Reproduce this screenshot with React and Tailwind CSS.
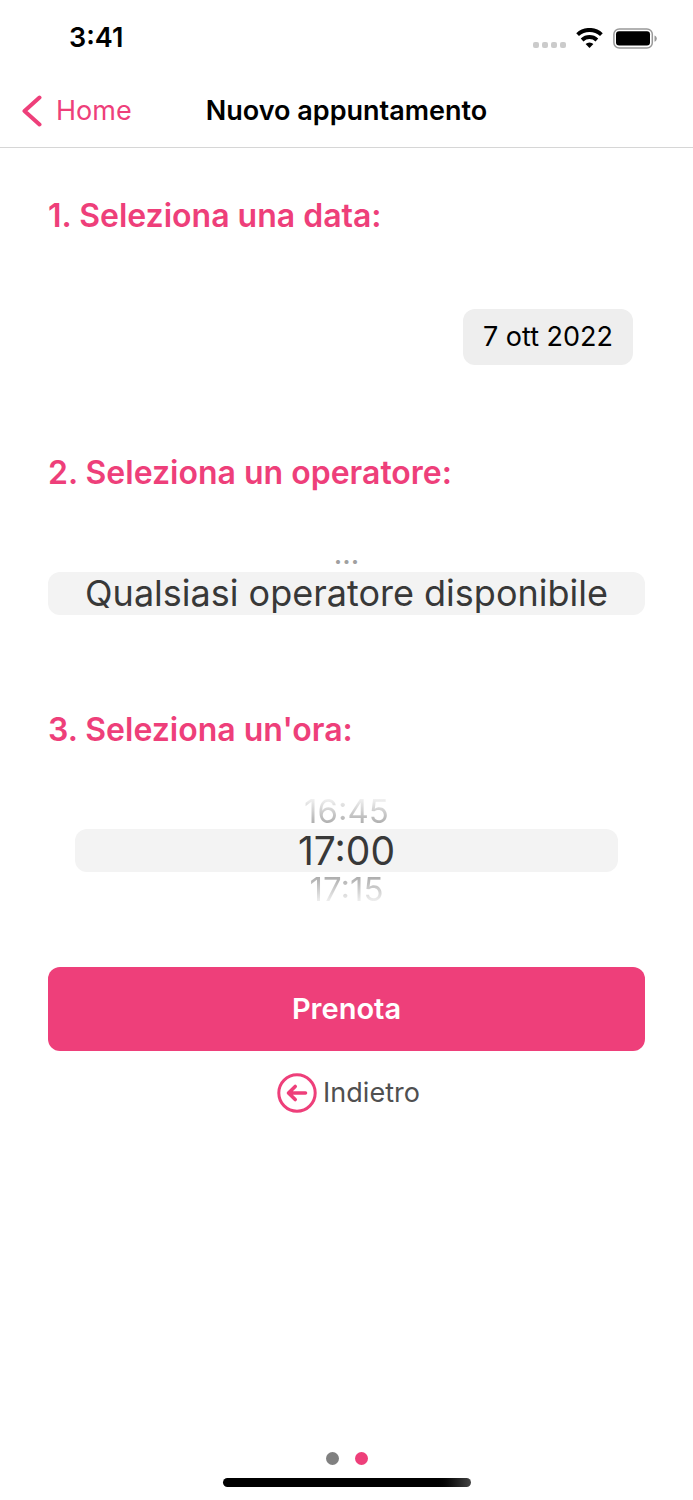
import React from 'react';

const hours = ['16:30', '16:45', '17:00', '17:15', '17:30'];

const StatusBar = () => (
    <div className="h-[74px] pt-0.5 pl-[69px] pr-9 flex items-center justify-between">
        <span className="text-[27px] leading-8 font-semibold">3:41</span>
        <div className="flex items-center gap-2.5">
            <div className="flex gap-[3px] pt-3.5">
                <span className="w-1.5 h-1.5 rounded-xs bg-[#cbcbcb]" />
                <span className="w-1.5 h-1.5 rounded-xs bg-[#cbcbcb]" />
                <span className="w-1.5 h-1.5 rounded-xs bg-[#cbcbcb]" />
                <span className="w-1.5 h-1.5 rounded-xs bg-[#cbcbcb]" />
            </div>
            <svg className="w-[27px] h-5" viewBox="0 0 27 20" fill="none" stroke="#000" strokeWidth="4" aria-hidden="true">
                <path d="M1.600 6.600a17.500 17.500 0 0 1 23.800 0" />
                <path d="M6.100 11.900a11 11 0 0 1 14.800 0" />
                <path d="M13.500 20 9.600 16a5.600 5.600 0 0 1 7.800 0z" fill="#000" stroke="none" />
            </svg>
            <svg className="w-11 h-[21px]" viewBox="0 0 44 21" aria-hidden="true">
                <rect x="0.9" y="0.9" width="38.4" height="19.2" rx="5.4" fill="none" stroke="#999" strokeWidth="1.5" />
                <rect x="3" y="3.2" width="34" height="14.4" rx="3" fill="#000" />
                <path d="M41.500 7.400c3 1 3 5.300 0 6.300z" fill="#999" />
            </svg>
        </div>
    </div>
);

const Section = ({ title, children }) => (
    <section>
        <h2 className="text-[32px] leading-10 font-semibold text-[#ee3f7a]">{title}</h2>
        <div className="mt-11 h-[113px] flex flex-col items-stretch justify-center">
            {children}
        </div>
    </section>
);

const App = () => {

    const [hour, setHour] = React.useState(2);

    return (
        <div className="min-h-screen flex flex-col bg-white text-black font-['Inter',sans-serif]">
            <StatusBar />
            <header className="h-[74px] grid grid-cols-[1fr_auto_1fr] items-center border-b border-[#d6d6d6]">
                <a href="#home" className="pl-[21px] flex items-center gap-3.5 text-[27px] leading-9 text-[#ee3f7a]">
                    <svg className="w-[21px] h-8" viewBox="0 0 21 32" fill="none" stroke="currentColor" strokeWidth="4" strokeLinecap="round" strokeLinejoin="round" aria-hidden="true">
                        <path d="M18.500 2.500 3.500 16l15 13.500" />
                    </svg>
                    Home
                </a>
                <h1 className="text-[27px] leading-9 font-semibold">Nuovo appuntamento</h1>
            </header>
            <main className="px-12 pt-12 flex flex-col gap-15">
                <Section title="1. Seleziona una data:">
                    <button type="button" className="h-14 px-5 mr-3 self-end rounded-xl bg-[#eee] text-[27px] leading-9">7 ott 2022</button>
                </Section>
                <Section title="2. Seleziona un operatore:">
                    <button type="button" className="h-[35px] text-[28px] leading-[35px] font-medium text-[#a0a0a0]">...</button>
                    <button type="button" className="h-[43px] rounded-xl bg-[#f3f3f3] text-[36px] leading-[43px] text-[#383838] whitespace-nowrap">Qualsiasi operatore disponibile</button>
                    <div className="h-[35px]" />
                </Section>
                <Section title="3. Seleziona un'ora:">
                    <button
                        type="button"
                        className="h-[35px] text-[33px] leading-[35px] text-transparent bg-clip-text bg-linear-to-b from-white to-[#a0a0a0]"
                        onClick={() => setHour(Math.max(1, hour - 1))}
                    >
                        {hours[hour - 1]}
                    </button>
                    <div className="h-[43px] mx-[27px] rounded-xl bg-[#f3f3f3] text-center text-[39px] leading-[43px] text-[#383838]">{hours[hour]}</div>
                    <button
                        type="button"
                        className="h-[35px] text-[33px] leading-[35px] text-transparent bg-clip-text bg-linear-to-t from-white to-[#a0a0a0]"
                        onClick={() => setHour(Math.min(hours.length - 2, hour + 1))}
                    >
                        {hours[hour + 1]}
                    </button>
                </Section>
                <div className="flex flex-col items-center gap-[22px]">
                    <button type="button" className="w-full h-[84px] rounded-xl bg-[#ee3f7a] text-[29px] leading-9 font-semibold text-white">Prenota</button>
                    <button type="button" className="pl-1 flex items-center gap-1.5 text-[27px] leading-9 text-[#505050]">
                        <svg className="w-10 h-10 text-[#ee3f7a]" viewBox="0 0 40 40" fill="none" stroke="currentColor" strokeWidth="3" strokeLinecap="round" strokeLinejoin="round" aria-hidden="true">
                            <circle cx="20" cy="20" r="18.200" />
                            <path d="M28.500 20H12M18.200 13.500 11.500 20l6.700 6.500" strokeWidth="3.600" />
                        </svg>
                        Indietro
                    </button>
                </div>
            </main>
            <footer className="mt-auto pb-[13px] flex flex-col items-center gap-[13px]">
                <div className="flex gap-4">
                    <button type="button" aria-label="Pagina 1" className="w-[13px] h-[13px] rounded-full bg-[#808080]" />
                    <button type="button" aria-label="Pagina 2" className="w-[13px] h-[13px] rounded-full bg-[#ee3f7a]" />
                </div>
                <div className="w-[248px] h-[9px] rounded-full bg-linear-to-r from-black from-85% to-[#444]" />
            </footer>
        </div>
    );
};

export default App;
